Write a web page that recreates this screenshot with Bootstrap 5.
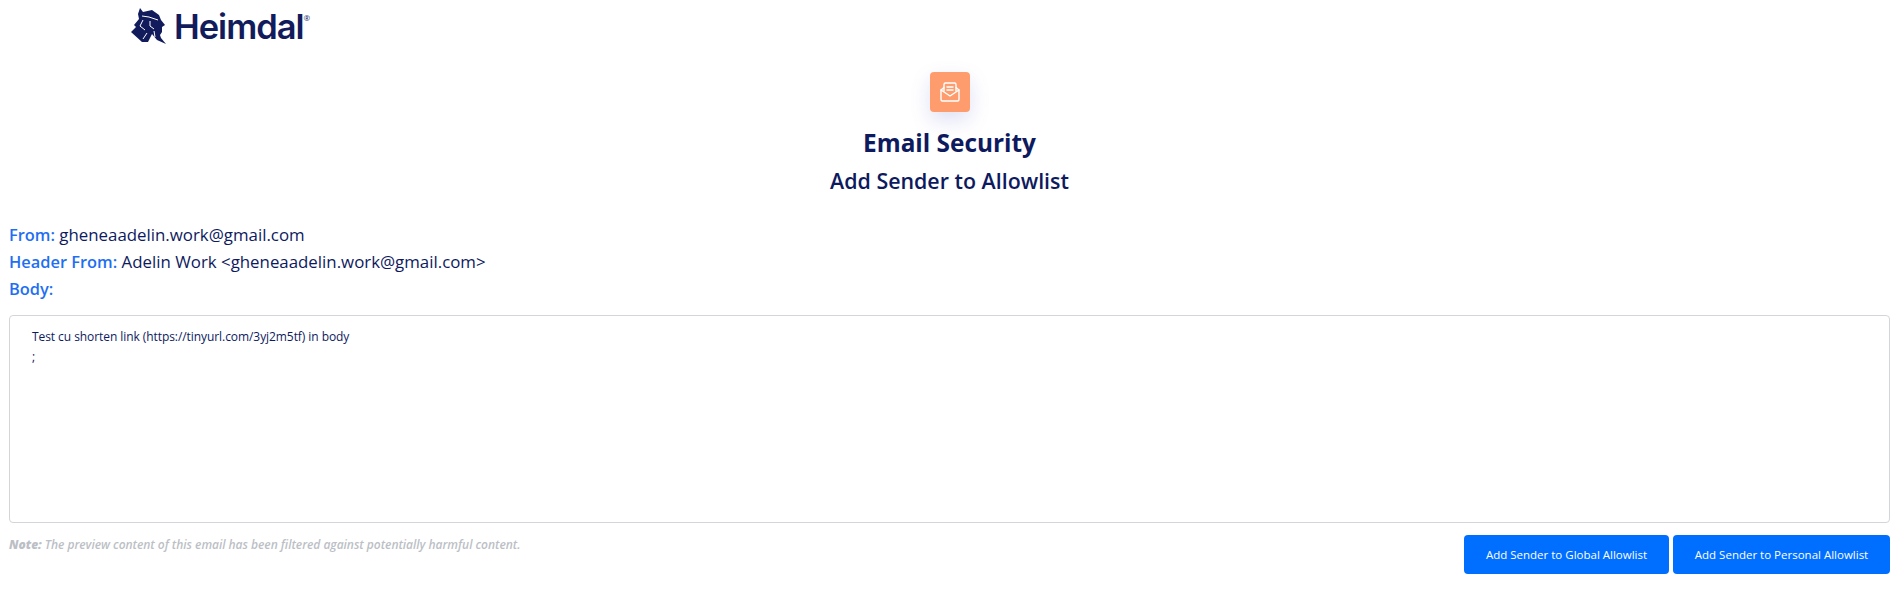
<!DOCTYPE html>
<html lang="en">
  <head>
    <meta charset="UTF-8" />
    <meta name="viewport" content="width=device-width, initial-scale=1.0" />
    <title>Email Security</title>
    <link rel="stylesheet" href="https://cdn.jsdelivr.net/npm/bootstrap@5.3.0/dist/css/bootstrap.min.css" />
    <style>
      body {
        font-family: "Open Sans", sans-serif;
        color: #0e1a5e;
        background: #fff;
      }
      .page-wrap {
        padding: 0 3px 0 9px;
      }
      .logo-bar {
        height: 72px;
        padding: 7px 0 0 121px;
      }
      .logo-word {
        font-family: "Inter", sans-serif;
        font-size: 34.5px;
        font-weight: 600;
        line-height: 42px;
        letter-spacing: -1px;
        margin: -1px 0 0 7px;
        color: #121c5c;
      }
      .logo-reg {
        font-size: 8px;
        line-height: 1;
        margin: 7px 0 0 0;
        color: #121c5c;
      }
      .app-icon {
        width: 40px;
        height: 40px;
        background: #ff9c6e;
        border-radius: 4px;
        box-shadow: 0 8px 20px rgba(90, 100, 200, 0.2);
      }
      .app-title {
        font-size: 24.4px;
        font-weight: 700;
        line-height: 34px;
        color: #0e1a5e;
        margin: 14px 0 0;
      }
      .app-sub {
        font-size: 21.4px;
        font-weight: 550;
        line-height: 30px;
        color: #0e1a5e;
        margin: 6px 0 0;
      }
      .meta-block {
        margin-top: 25px;
        font-size: 16.85px;
        font-weight: 500;
      }
      .meta-line {
        height: 27px;
        line-height: 27px;
      }
      .meta-label {
        font-size: 16.4px;
        font-weight: 600;
        color: #1f6ff2;
      }
      .preview-box {
        height: 208px;
        margin-top: 13px;
        padding: 11px 22px;
        border: 1px solid #d2d5da;
        border-radius: 4px;
        font-size: 12px;
        font-weight: 500;
        letter-spacing: -0.07px;
        line-height: 20px;
      }
      .note-text {
        font-size: 12px;
        font-style: italic;
        font-weight: 600;
        letter-spacing: -0.03px;
        color: #bcbfc6;
        padding-top: 13px;
      }
      .action-btn {
        width: 205px;
        height: 39px;
        padding: 0;
        font-size: 11.5px;
        font-weight: 500;
        background: #006eff;
        border: 0;
        border-radius: 4px;
      }
      .action-btn.wide {
        width: 217px;
      }
    </style>
  </head>
  <body>
    <div class="page-wrap">
      <div class="logo-bar d-flex align-items-start">
        <svg width="37" height="39" viewBox="0 0 37 39" fill="#121c5c">
          <!-- helmet and beard -->
          <path d="M10 1l3 4 9-2 7 5 2 5 4 5-3 2 0 5-2 3 1 3 5 6-9-4-5-6-4 8-6 0-11-10 5-5-2-2 5-6-1-5z" />
          <path d="M12 9l7 1 9 3M13 13l-3 6 5 4M20 14l0 5 4 3M24 24l1 6M17 26l-4 6" fill="none" stroke="#fff" stroke-width="1" />
        </svg>
        <span class="logo-word">Heimdal</span>
        <span class="logo-reg">®</span>
      </div>

      <div class="d-flex flex-column align-items-center text-center">
        <div class="app-icon d-flex align-items-center justify-content-center">
          <svg width="22" height="22" viewBox="0 0 22 22" fill="none" stroke="#fff" stroke-width="1.4" stroke-linejoin="round" stroke-linecap="round">
            <path d="M5 10V3.5a1.5 1.5 0 0 1 1.5-1.5h9A1.5 1.5 0 0 1 17 3.5V10" />
            <path d="M8 6h6M8 9h6" />
            <path d="M5 6.5L2 9v9.5A1.5 1.5 0 0 0 3.5 20h15a1.5 1.5 0 0 0 1.5-1.5V9l-3-2.5" />
            <path d="M2 9l9 6 9-6" />
          </svg>
        </div>
        <h1 class="app-title">Email Security</h1>
        <h2 class="app-sub">Add Sender to Allowlist</h2>
      </div>

      <div class="meta-block">
        <div class="meta-line"><span class="meta-label">From:</span> gheneaadelin.work@gmail.com</div>
        <div class="meta-line"><span class="meta-label">Header From:</span> Adelin Work &lt;gheneaadelin.work@gmail.com&gt;</div>
        <div class="meta-line"><span class="meta-label">Body:</span></div>
      </div>

      <div class="preview-box">
        <div>Test cu shorten link (https://tinyurl.com/3yj2m5tf) in body</div>
        <div>;</div>
      </div>

      <div class="d-flex justify-content-between align-items-start">
        <div class="note-text"><b>Note:</b> The preview content of this email has been filtered against potentially harmful content.</div>
        <div class="d-flex gap-1 pt-2 mt-1">
          <button class="btn btn-primary action-btn">Add Sender to Global Allowlist</button>
          <button class="btn btn-primary action-btn wide">Add Sender to Personal Allowlist</button>
        </div>
      </div>
    </div>
    <script src="https://cdn.jsdelivr.net/npm/bootstrap@5.3.0/dist/js/bootstrap.bundle.min.js"></script>
  </body>
</html>
